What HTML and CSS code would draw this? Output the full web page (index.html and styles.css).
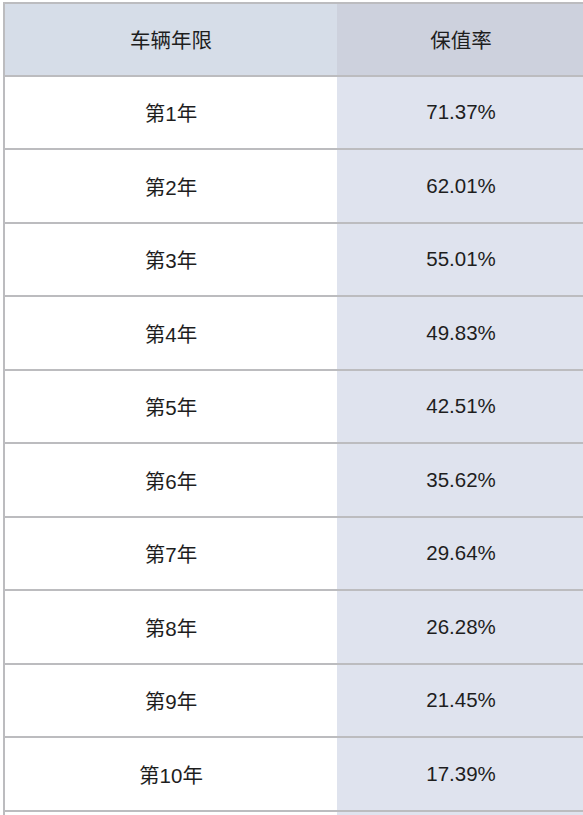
FILE: index.html
```html
<!DOCTYPE html>
<html lang="zh">
<head>
<meta charset="utf-8">
<link rel="stylesheet" href="styles.css">
</head>
<body>
<table class="rate-table">
  <thead>
    <tr><th class="col-year">车辆年限</th><th class="col-rate">保值率</th></tr>
  </thead>
  <tbody>
    <tr><td class="col-year">第1年</td><td class="col-rate">71.37%</td></tr>
    <tr><td class="col-year">第2年</td><td class="col-rate">62.01%</td></tr>
    <tr><td class="col-year">第3年</td><td class="col-rate">55.01%</td></tr>
    <tr><td class="col-year">第4年</td><td class="col-rate">49.83%</td></tr>
    <tr><td class="col-year">第5年</td><td class="col-rate">42.51%</td></tr>
    <tr><td class="col-year">第6年</td><td class="col-rate">35.62%</td></tr>
    <tr><td class="col-year">第7年</td><td class="col-rate">29.64%</td></tr>
    <tr><td class="col-year">第8年</td><td class="col-rate">26.28%</td></tr>
    <tr><td class="col-year">第9年</td><td class="col-rate">21.45%</td></tr>
    <tr><td class="col-year">第10年</td><td class="col-rate">17.39%</td></tr>
    <tr><td class="col-year">&nbsp;</td><td class="col-rate">&nbsp;</td></tr>
  </tbody>
</table>
</body>
</html>
```

FILE: styles.css
```css
html, body {
  margin: 0;
  padding: 0;
  background: #ffffff;
}
body {
  padding: 2px 0 0 3px;
  overflow: hidden;
  font-family: "Liberation Sans", "Noto Sans CJK SC", sans-serif;
  color: #1e1e1e;
}
.rate-table {
  border-collapse: collapse;
  table-layout: fixed;
  width: 582px;
  font-size: 20.5px;
}
.rate-table th,
.rate-table td {
  height: 71.5px;
  padding: 0;
  text-align: center;
  vertical-align: middle;
  font-weight: normal;
  border-top: 2px solid #bcbcbf;
  border-bottom: 2px solid #bcbcbf;
}
.rate-table th {
  height: 70.5px;
}
.rate-table .col-year {
  width: 332px;
  border-left: 2px solid #bcbcbf;
}
.rate-table td.col-year {
  background: #ffffff;
}
.rate-table td.col-rate {
  background: #dfe3ee;
}
.rate-table th.col-year {
  background: #d6dde8;
}
.rate-table th.col-rate {
  background: #cdd1dd;
}
```
